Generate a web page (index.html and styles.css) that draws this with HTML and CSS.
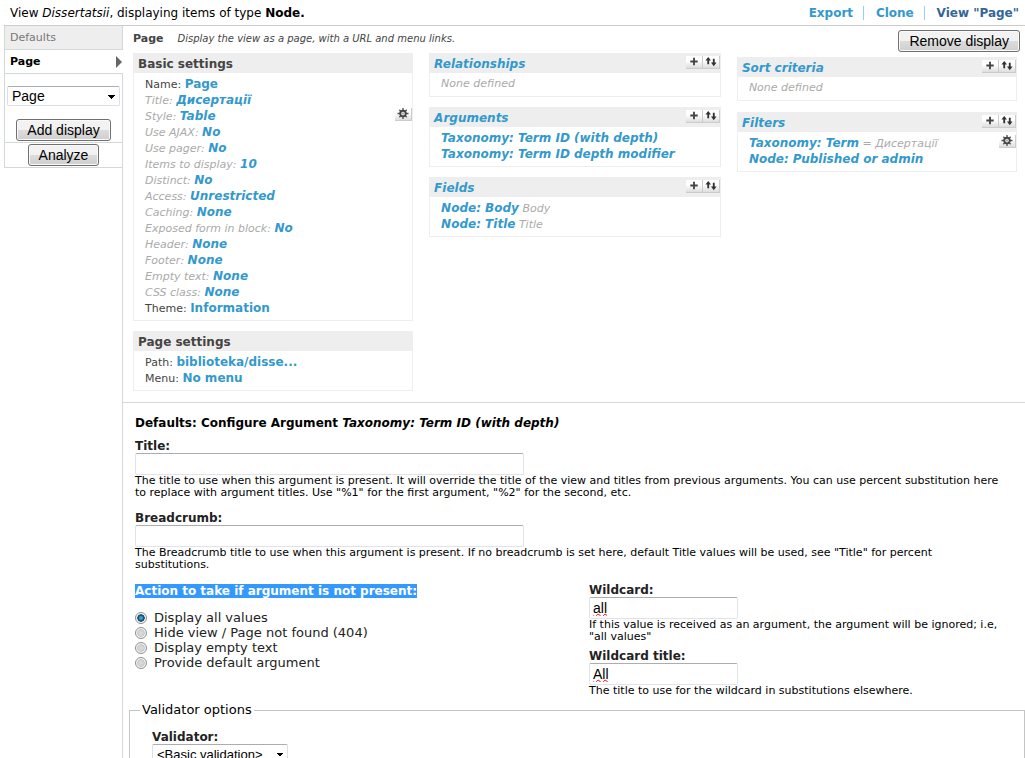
FILE: index.html
```html
<!DOCTYPE html>
<html lang="en">
<head>
    <meta charset="UTF-8">
    <meta name="viewport" content="width=device-width, initial-scale=1.0">
    <title>Dissertatsii</title>
    <link rel="stylesheet" href="styles.css">
</head>
<body>
    <!-- icon shapes used by the buttons -->
    <svg class="icon-defs" width="0" height="0">
        <symbol id="icon-add" viewBox="0 0 16 13">
            <path d="M4 6h8M8 2v8" stroke="#444" stroke-width="2" fill="none"/>
        </symbol>
        <symbol id="icon-sort" viewBox="0 0 16 13">
            <path d="M5 3v6M11 3v6" stroke="#333" stroke-width="2" fill="none"/>
            <path d="M2 5l3-4 3 4zM8 7l3 4 3-4z" fill="#333"/>
        </symbol>
        <symbol id="icon-gear" viewBox="0 0 16 13">
            <path d="M8 0v12M2 6h12M4 2l8 8M12 2l-8 8" stroke="#555" stroke-width="1.500" fill="none"/>
            <circle cx="8" cy="6" r="3" fill="#eee" stroke="#444" stroke-width="2"/>
            <circle cx="8" cy="6" r="1" fill="#999"/>
        </symbol>
    </svg>

    <div class="top">
        <div>View <em>Dissertatsii</em>, displaying items of type <strong>Node.</strong></div>
        <div class="top-links">
            <a href="#">Export</a>
            <a href="#">Clone</a>
            <a href="#" class="current">View "Page"</a>
        </div>
    </div>

    <div class="view">
        <div class="tabs">
            <a href="#" class="tab">Defaults</a>
            <a href="#" class="tab active">Page</a>
            <div class="tab-form add">
                <select aria-label="Display type">
                    <option>Page</option>
                </select>
                <button class="btn">Add display</button>
            </div>
            <div class="tab-form">
                <button class="btn">Analyze</button>
            </div>
        </div>

        <div class="main">
            <div class="display">
                <div class="display-head">
                    <strong>Page</strong>
                    <em>Display the view as a page, with a URL and menu links.</em>
                </div>
                <div class="columns">
                    <div class="column">
                        <div class="box">
                            <div class="box-title">Basic settings</div>
                            <div class="box-body">
                                <div class="row own">Name: <a href="#">Page</a></div>
                                <div class="row">Title: <a href="#">Дисертації</a></div>
                                <div class="row">Style: <a href="#">Table</a>
                                    <button class="icon gear" aria-label="Settings"><svg><use href="#icon-gear"/></svg></button>
                                </div>
                                <div class="row">Use AJAX: <a href="#">No</a></div>
                                <div class="row">Use pager: <a href="#">No</a></div>
                                <div class="row">Items to display: <a href="#">10</a></div>
                                <div class="row">Distinct: <a href="#">No</a></div>
                                <div class="row">Access: <a href="#">Unrestricted</a></div>
                                <div class="row">Caching: <a href="#">None</a></div>
                                <div class="row">Exposed form in block: <a href="#">No</a></div>
                                <div class="row">Header: <a href="#">None</a></div>
                                <div class="row">Footer: <a href="#">None</a></div>
                                <div class="row">Empty text: <a href="#">None</a></div>
                                <div class="row">CSS class: <a href="#">None</a></div>
                                <div class="row own">Theme: <a href="#">Information</a></div>
                            </div>
                        </div>
                        <div class="box">
                            <div class="box-title">Page settings</div>
                            <div class="box-body">
                                <div class="row own">Path: <a href="#">biblioteka/disse...</a></div>
                                <div class="row own">Menu: <a href="#">No menu</a></div>
                            </div>
                        </div>
                    </div>

                    <div class="column">
                        <div class="box">
                            <div class="box-title"><a href="#">Relationships</a>
                                <span class="icons">
                                    <button class="icon" aria-label="Add"><svg><use href="#icon-add"/></svg></button>
                                    <button class="icon" aria-label="Rearrange"><svg><use href="#icon-sort"/></svg></button>
                                </span>
                            </div>
                            <div class="box-body">
                                <div class="row">None defined</div>
                            </div>
                        </div>
                        <div class="box">
                            <div class="box-title"><a href="#">Arguments</a>
                                <span class="icons">
                                    <button class="icon" aria-label="Add"><svg><use href="#icon-add"/></svg></button>
                                    <button class="icon" aria-label="Rearrange"><svg><use href="#icon-sort"/></svg></button>
                                </span>
                            </div>
                            <div class="box-body">
                                <div class="row"><a href="#">Taxonomy: Term ID (with depth)</a></div>
                                <div class="row"><a href="#">Taxonomy: Term ID depth modifier</a></div>
                            </div>
                        </div>
                        <div class="box">
                            <div class="box-title"><a href="#">Fields</a>
                                <span class="icons">
                                    <button class="icon" aria-label="Add"><svg><use href="#icon-add"/></svg></button>
                                    <button class="icon" aria-label="Rearrange"><svg><use href="#icon-sort"/></svg></button>
                                </span>
                            </div>
                            <div class="box-body">
                                <div class="row"><a href="#">Node: Body</a> Body</div>
                                <div class="row"><a href="#">Node: Title</a> Title</div>
                            </div>
                        </div>
                    </div>

                    <div class="column last">
                        <button class="btn remove">Remove display</button>
                        <div class="box">
                            <div class="box-title"><a href="#">Sort criteria</a>
                                <span class="icons">
                                    <button class="icon" aria-label="Add"><svg><use href="#icon-add"/></svg></button>
                                    <button class="icon" aria-label="Rearrange"><svg><use href="#icon-sort"/></svg></button>
                                </span>
                            </div>
                            <div class="box-body">
                                <div class="row">None defined</div>
                            </div>
                        </div>
                        <div class="box">
                            <div class="box-title"><a href="#">Filters</a>
                                <span class="icons">
                                    <button class="icon" aria-label="Add"><svg><use href="#icon-add"/></svg></button>
                                    <button class="icon" aria-label="Rearrange"><svg><use href="#icon-sort"/></svg></button>
                                </span>
                            </div>
                            <div class="box-body">
                                <div class="row"><a href="#">Taxonomy: Term</a> = Дисертації
                                    <button class="icon gear" aria-label="Settings"><svg><use href="#icon-gear"/></svg></button>
                                </div>
                                <div class="row"><a href="#">Node: Published or admin</a></div>
                            </div>
                        </div>
                    </div>
                </div>
            </div>

            <form class="config">
                <div class="config-title">Defaults: Configure Argument <em>Taxonomy: Term ID (with depth)</em></div>
                <div class="item">
                    <label for="title">Title:</label>
                    <input type="text" id="title" class="text wide">
                    <div class="description">The title to use when this argument is present. It will override the title of the view and titles from previous arguments. You can use percent substitution here to replace with argument titles. Use "%1" for the first argument, "%2" for the second, etc.</div>
                </div>
                <div class="item">
                    <label for="breadcrumb">Breadcrumb:</label>
                    <input type="text" id="breadcrumb" class="text wide">
                    <div class="description">The Breadcrumb title to use when this argument is present. If no breadcrumb is set here, default Title values will be used, see "Title" for percent substitutions.</div>
                </div>
                <div class="split">
                    <div role="radiogroup" aria-labelledby="action-label">
                        <span class="selected" id="action-label">Action to take if argument is not present:</span>
                        <div class="radios">
                            <label><input type="radio" name="action" checked> Display all values</label>
                            <label><input type="radio" name="action"> Hide view / Page not found (404)</label>
                            <label><input type="radio" name="action"> Display empty text</label>
                            <label><input type="radio" name="action"> Provide default argument</label>
                        </div>
                    </div>
                    <div class="wildcards">
                        <div>
                            <label for="wildcard">Wildcard:</label>
                            <input type="text" id="wildcard" class="text misspelled" value="all">
                            <div class="description">If this value is received as an argument, the argument will be ignored; i.e, "all values"</div>
                        </div>
                        <div>
                            <label for="wildcard-title">Wildcard title:</label>
                            <input type="text" id="wildcard-title" class="text misspelled" value="All">
                            <div class="description">The title to use for the wildcard in substitutions elsewhere.</div>
                        </div>
                    </div>
                </div>
                <fieldset>
                    <legend>Validator options</legend>
                    <label for="validator">Validator:</label>
                    <select id="validator">
                        <option>&lt;Basic validation&gt;</option>
                    </select>
                </fieldset>
            </form>
        </div>
    </div>
</body>
</html>
```
FILE: styles.css
```css
* {
    box-sizing: border-box;
}

body {
    margin: 0;
    height: 100vh;
    overflow: hidden;
    display: flex;
    flex-direction: column;
    padding-left: 4px;
    background: #fff;
    color: #000;
    font: 12px/16px Verdana, "DejaVu Sans", sans-serif;
}

a {
    color: #3399cc;
    font-weight: bold;
    text-decoration: none;
}

button, input, select {
    font: 14px "Liberation Sans", Arial, sans-serif;
    color: #000;
    margin: 0;
}

.icon-defs {
    position: absolute;
}

/* top line */
.top {
    display: flex;
    flex-shrink: 0;
    justify-content: space-between;
    height: 26px;
    padding: 5px 6px 0 6px;
    border-bottom: 1px solid #ccc;
}

.top-links a {
    display: inline-block;
    line-height: 14px;
    padding-left: 10px;
}

.top-links a + a {
    margin-left: 6px;
    border-left: 1px solid #99ccff;
    padding-left: 12px;
}

.top-links a.current {
    color: #336699;
}

.view {
    display: flex;
    flex: 1;
}

/* left tabs */
.tabs {
    width: 119px;
    border-right: 1px solid #d3d9d9;
}

.tab {
    display: block;
    height: 24px;
    padding: 4px 5px;
    border: solid #d3d9d9;
    border-width: 0 0 1px 1px;
    background: #eee;
    color: #777;
    font-size: 11px;
    font-weight: normal;
}

.tab.active {
    position: relative;
    margin-right: -1px;
    background: #fff;
    color: #000;
    font-weight: bold;
}

.tab.active::after {
    content: "";
    position: absolute;
    right: 1px;
    top: 6px;
    border: 6px solid transparent;
    border-left-color: #666;
    border-right-width: 0;
}

.tab-form {
    padding: 1px 2px;
    border: solid #d3d9d9;
    border-width: 0 0 1px 1px;
    text-align: center;
}

.tab-form.add {
    padding-top: 12px;
}

.tab-form .btn {
    display: block;
    margin: 0 auto;
}

.tab-form select {
    width: 100%;
    margin-bottom: 13px;
}

.btn {
    height: 22px;
    padding: 0 10px;
    border: 1px solid #707070;
    border-radius: 3px;
    background: linear-gradient(#f2f2f2 48%, #dcdcdc 52%, #cfcfcf);
    box-shadow: inset 0 0 0 1px #fafafa;
    line-height: 18px;
}

/* the arrow is made of two mirrored triangles */
select {
    appearance: none;
    height: 20px;
    padding: 0 4px;
    border: 1px solid #dbdfe6;
    border-top-color: #abadb3;
    border-radius: 2px;
    background: linear-gradient(to bottom left, #000 50%, transparent 50%) no-repeat right 7px top 8px / 4px 4px,
        linear-gradient(to bottom right, #000 50%, transparent 50%) no-repeat right 3px top 8px / 4px 4px;
}

/* display settings */
.main {
    flex: 1;
    min-width: 0;
}

.display {
    padding: 5px 8px 11px 10px;
    border-bottom: 1px solid #d3d9d9;
    color: #444;
    font-size: 11px;
}

.display-head {
    display: flex;
    gap: 14px;
    height: 22px;
}

.display-head em {
    font-size: 10px;
}

.columns {
    display: grid;
    grid-template-columns: 24fr 25fr 24fr;
    gap: 16px;
}

.column {
    display: flex;
    flex-direction: column;
    gap: 10px;
}

.column.last {
    gap: 11px;
    margin-top: -23px;
}

.remove {
    align-self: flex-end;
    margin: 0 -3px -6px 0;
}

.box {
    border: 1px solid #eee;
}

.box-title {
    display: flex;
    justify-content: space-between;
    height: 19px;
    padding: 0 0 0 4px;
    background: #eee;
    font-size: 12px;
    line-height: 20px;
    font-weight: bold;
}

.box-title a {
    font-style: italic;
}

.icons {
    display: flex;
    padding-top: 2px;
}

.icon {
    width: 17px;
    height: 13px;
    padding: 0;
    border: solid #ccc;
    border-width: 0 1px 1px 0;
    background: linear-gradient(#fff 40%, #ddd);
}

.icon svg {
    display: block;
    width: 16px;
    height: 12px;
}

.box-body {
    padding: 3px 0 4px 11px;
}

.row {
    height: 16px;
    color: #aaa;
    font-style: italic;
}

.row a {
    font-size: 12px;
}

.row.own {
    color: #444;
    font-style: normal;
}

.icon.gear {
    float: right;
}

/* argument form */
.config {
    padding: 12px 0 0 12px;
}

.config label,
.config-title,
.selected {
    font-weight: bold;
}

.config-title {
    margin-bottom: 8px;
}

.item {
    margin-bottom: 12px;
    padding-right: 18px;
}

.item label,
.wildcards label,
fieldset label {
    display: block;
    height: 14px;
    color: #222;
    line-height: 14px;
}

.text {
    display: block;
    width: 149px;
    height: 22px;
    padding: 2px 3px;
    border: 1px solid #e2e3ea;
    border-top-color: #abadb3;
    border-radius: 2px;
}

.text.wide {
    width: 389px;
}

.misspelled {
    text-decoration: underline wavy red 1px;
    text-decoration-skip-ink: none;
    text-underline-offset: 0;
}

.description {
    font-size: 11px;
    line-height: 12px;
}

.split {
    display: grid;
    grid-template-columns: 454px 1fr;
}

.selected {
    display: inline-block;
    background: #3399ff;
    color: #fff;
    line-height: 14px;
}

.radios {
    padding-top: 11px;
}

.radios label {
    display: flex;
    align-items: center;
    gap: 7px;
    height: 15px;
    color: #222;
    font-size: 13px;
    font-weight: normal;
}

.radios input {
    appearance: none;
    width: 12px;
    height: 12px;
    border: 1px solid #8e8f8f;
    border-radius: 50%;
    background: radial-gradient(#ddd, #ccc 50%, #f4f4f4 60%);
}

.radios input:checked {
    background: radial-gradient(circle, #35a8d8 15%, #0b3050 48%, #f4f4f4 56%);
}

.wildcards {
    display: flex;
    flex-direction: column;
    gap: 6px;
    padding-right: 10px;
}

fieldset {
    margin: 5px 0 0 -6px;
    padding: 12px 22px 40px;
    border: 1px solid #c4c4c4;
}

fieldset select {
    padding-right: 24px;
    font-size: 13px;
}

legend {
    margin-left: -12px;
    padding: 0 2px;
    font-size: 13px;
}
```
